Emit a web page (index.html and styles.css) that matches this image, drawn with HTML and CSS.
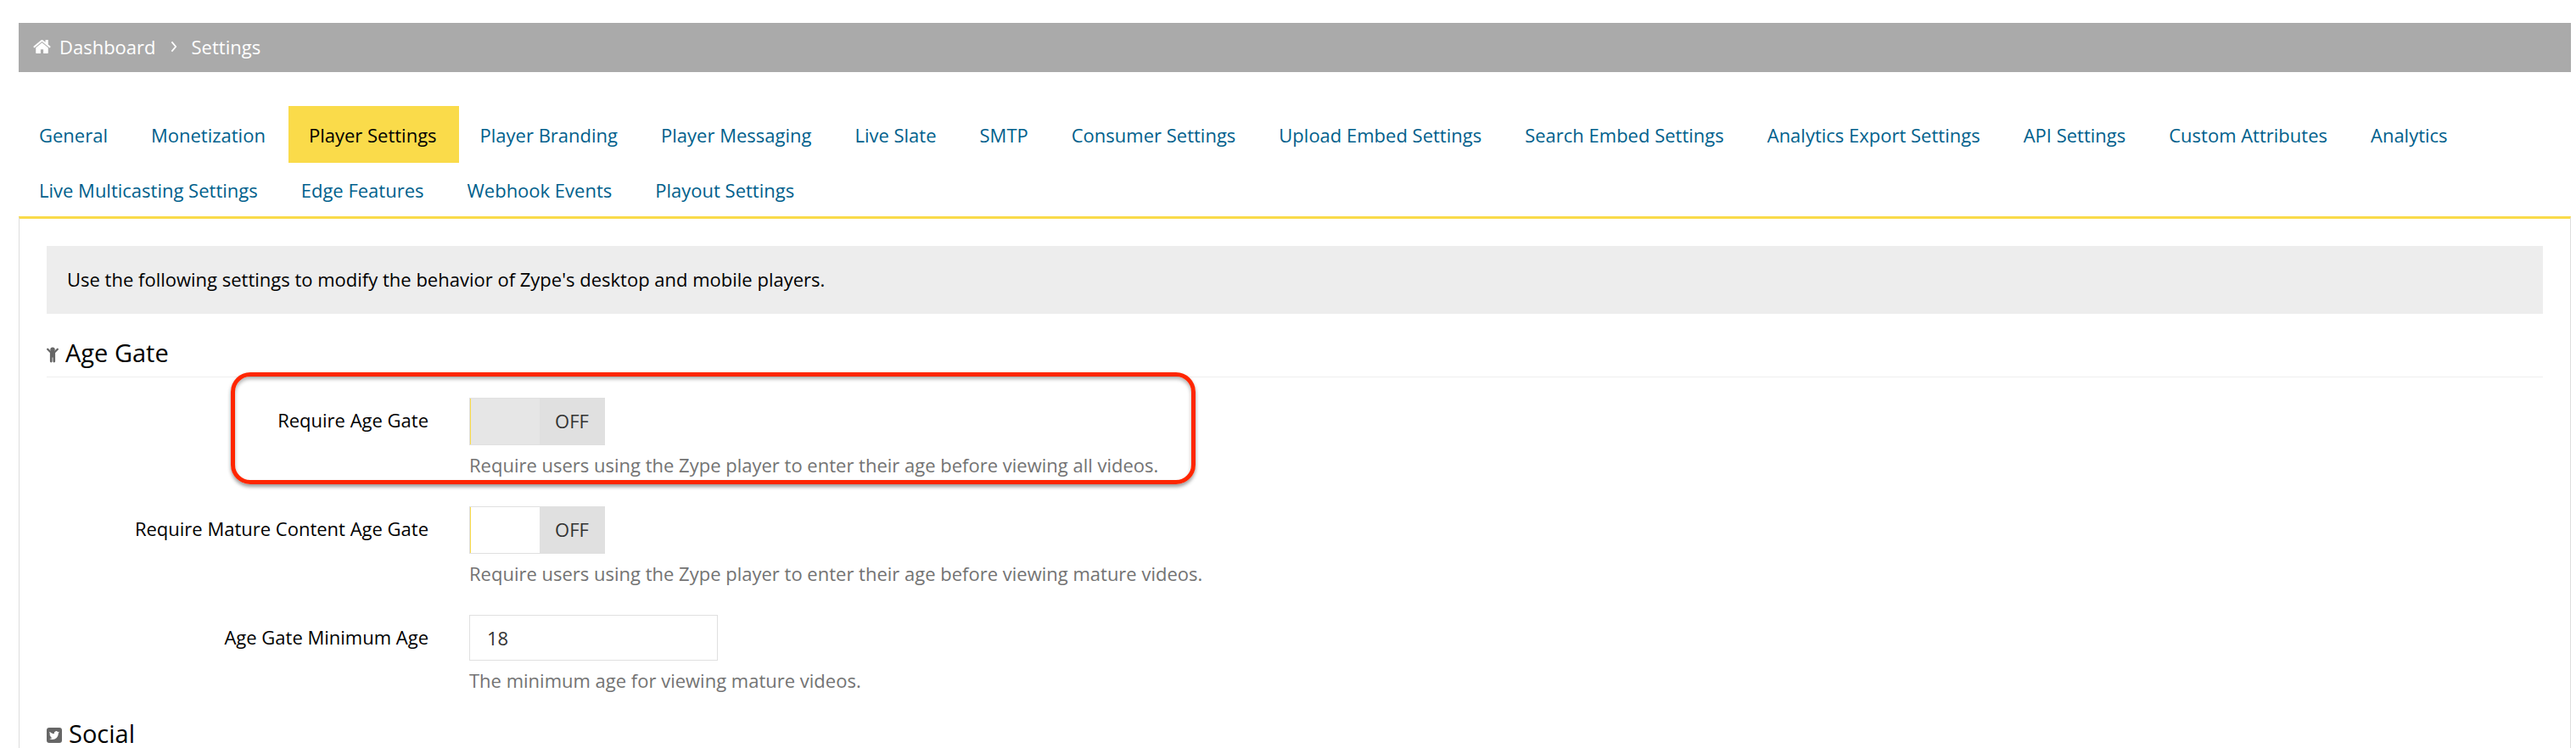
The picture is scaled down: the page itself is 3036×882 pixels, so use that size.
FILE: index.html
```html
<!DOCTYPE html>
<html lang="en">
<head>
<meta charset="utf-8">
<title>Settings</title>
<link rel="stylesheet" href="styles.css">
</head>
<body>
<nav class="breadcrumb" aria-label="Breadcrumb">
  <a class="crumb" href="#">
    <svg class="home-icon" viewBox="0 240 1664 1312" aria-hidden="true"><path d="M1408 992v480q0 26-19 45t-45 19h-384v-384h-256v384h-384q-26 0-45-19t-19-45v-480q0-1 .5-3t.5-3l575-474 575 474q1 2 1 6zm223-69l-62 74q-8 9-21 11h-3q-13 0-21-7l-692-577-692 577q-12 8-24 7-13-2-21-11l-62-74q-8-10-7-23.5t11-21.5l719-599q32-26 76-26t76 26l244 204v-195q0-14 9-23t23-9h192q14 0 23 9t9 23v408l219 182q10 8 11 21.500t-7 23.500z"/></svg>
    Dashboard
  </a>
  <svg class="chevron" viewBox="0 0 8 16" aria-hidden="true"><path d="M1 1.500 6.500 8 1 14.500"/></svg>
  <span>Settings</span>
</nav>

<nav class="tabs" aria-label="Settings sections">
  <a class="tab" href="#">General</a>
  <a class="tab" href="#">Monetization</a>
  <a class="tab tab-active" href="#" aria-current="page">Player Settings</a>
  <a class="tab" href="#">Player Branding</a>
  <a class="tab" href="#">Player Messaging</a>
  <a class="tab" href="#">Live Slate</a>
  <a class="tab" href="#">SMTP</a>
  <a class="tab" href="#">Consumer Settings</a>
  <a class="tab" href="#">Upload Embed Settings</a>
  <a class="tab" href="#">Search Embed Settings</a>
  <a class="tab" href="#">Analytics Export Settings</a>
  <a class="tab" href="#">API Settings</a>
  <a class="tab" href="#">Custom Attributes</a>
  <a class="tab" href="#">Analytics</a>
  <a class="tab" href="#">Live Multicasting Settings</a>
  <a class="tab" href="#">Edge Features</a>
  <a class="tab" href="#">Webhook Events</a>
  <a class="tab" href="#">Playout Settings</a>
</nav>

<main class="panel">
  <p class="notice">Use the following settings to modify the behavior of Zype's desktop and mobile players.</p>

  <form>
    <h2 class="section-title">
      <svg class="child-icon" viewBox="-60 160 1154 1482" aria-hidden="true"><path d="M1065 413l-292 292v824q0 46-33 79t-79 33-79-33-33-79v-384h-64v384q0 46-33 79t-79 33-79-33-33-79v-824l-292-292q-28-28-28-68t28-68q29-28 68.500-28t67.500 28l228 228h368l228-228q28-28 68-28t68 28q28 29 28 68.500t-28 67.500z"/><circle cx="517" cy="384" r="224"/></svg>
      Age Gate
    </h2>

    <div class="field">
      <label class="field-label" for="age-gate">Require Age Gate</label>
      <div class="field-body">
        <span class="toggle toggle-hover">
          <input class="toggle-input" id="age-gate" type="checkbox">
          <span class="toggle-state" aria-hidden="true">OFF</span>
        </span>
        <p class="help">Require users using the Zype player to enter their age before viewing all videos.</p>
      </div>
      <div class="highlight"></div>
    </div>

    <div class="field">
      <label class="field-label" for="mature-gate">Require Mature Content Age Gate</label>
      <div class="field-body">
        <span class="toggle">
          <input class="toggle-input" id="mature-gate" type="checkbox">
          <span class="toggle-state" aria-hidden="true">OFF</span>
        </span>
        <p class="help">Require users using the Zype player to enter their age before viewing mature videos.</p>
      </div>
    </div>

    <div class="field">
      <label class="field-label" for="min-age">Age Gate Minimum Age</label>
      <div class="field-body">
        <input class="text-input" id="min-age" type="text" value="18">
        <p class="help">The minimum age for viewing mature videos.</p>
      </div>
    </div>

    <h2 class="section-title">
      <svg class="twitter-icon" viewBox="0 0 18 18" aria-hidden="true"><rect width="18" height="18" rx="3"/><path fill="#fff" d="M15 5.3c-.4.2-.9.4-1.4.4.5-.3.9-.8 1.1-1.3-.5.3-1 .5-1.6.6a2.5 2.5 0 0 0-4.3 2.2C6.7 7.1 4.9 6.2 3.700 4.700c-.6 1.100-.3 2.500.8 3.300-.4 0-.8-.1-1.100-.3 0 1.200.8 2.200 2 2.500-.4.100-.7.100-1.100 0 .3 1 1.200 1.700 2.300 1.700A5 5 0 0 1 3 12.900c4.900 3 10.900-.3 10.800-6.300.5-.4.900-.8 1.200-1.300z"/></svg>
      Social
    </h2>
  </form>
</main>
</body>
</html>
```

FILE: styles.css
```css
* {
  box-sizing: border-box;
}

body {
  margin: 0;
  padding: 27px 6px 0 22px;
  background: #fff;
  color: #000;
  font-family: "Open Sans", "Liberation Sans", sans-serif;
  font-size: 22px;
  line-height: 30px;
}

.breadcrumb {
  display: flex;
  align-items: center;
  gap: 17px;
  padding: 13px 17px 15px;
  background: #aaa;
  color: #fff;
}

.crumb {
  display: flex;
  align-items: center;
  gap: 10px;
  color: inherit;
  text-decoration: none;
}

.home-icon {
  width: 21px;
  height: 18px;
  fill: currentColor;
}

.chevron {
  width: 8px;
  height: 14px;
  fill: none;
  stroke: currentColor;
  stroke-width: 2;
}

.tabs {
  display: flex;
  flex-wrap: wrap;
  column-gap: 1px;
  margin-top: 40px;
}

.tab {
  height: 65px;
  padding: 19px 26px 16px 24px;
  color: #005f8c;
  text-decoration: none;
}

.tab-active {
  height: 67px;
  margin-bottom: -2px;
  background: #fadb4a;
  color: #000;
}

.panel {
  padding: 32px 32px 0;
  border: 1px solid #ddd;
  border-top: 3px solid #fadb4a;
  border-bottom: 0;
}

.notice {
  margin: 0 0 26px;
  padding: 24px 24px 26px;
  background: #ededed;
}

.section-title {
  display: flex;
  align-items: center;
  gap: 8px;
  margin: 0 0 24px;
  padding-bottom: 8px;
  border-bottom: 1px solid #eee;
  font-size: 29px;
  font-weight: 400;
  line-height: 40px;
}

.child-icon {
  width: 14px;
  height: 19px;
  margin-top: 4px;
  fill: #666;
}

.twitter-icon {
  width: 18px;
  height: 18px;
  margin-top: 4px;
  fill: #666;
}

.field {
  position: relative;
  display: grid;
  grid-template-columns: 450px 1fr;
  column-gap: 48px;
}

.field + .field {
  margin-top: 34px;
}

.field + .section-title {
  margin-top: 28px;
}

.field-label {
  padding-top: 11px;
  text-align: right;
}

.toggle {
  position: relative;
  display: flex;
  justify-content: flex-end;
  width: 160px;
  height: 56px;
  border: 1px solid #e0e0e0;
  box-shadow: inset 1px 0 #fadb4a;
  color: #333;
}

.toggle-hover {
  background: #e6e6e6;
}

.toggle-input {
  position: absolute;
  inset: 0;
  margin: 0;
  appearance: none;
  cursor: pointer;
}

.toggle-state {
  width: 76px;
  padding-top: 11px;
  background: #e0e0e0;
  text-align: center;
}

.help {
  margin: 8px 0 0;
  color: #737373;
}

.text-input {
  display: block;
  width: 293px;
  height: 54px;
  padding: 0 20px;
  border: 1px solid #e0e0e0;
  background: #fff;
  color: #333;
  font: inherit;
}

.highlight {
  position: absolute;
  top: -30px;
  left: 217px;
  width: 1137px;
  height: 132px;
  border: 5px solid #ff2600;
  border-radius: 23px;
  box-shadow: 0 3px 4px rgba(0, 0, 0, 0.4), inset 0 3px 4px rgba(0, 0, 0, 0.3);
  pointer-events: none;
}
```
